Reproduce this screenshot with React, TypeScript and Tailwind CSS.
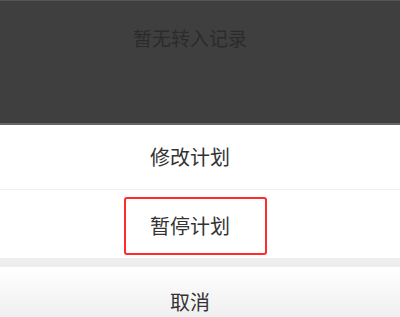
export default function App() {
  return (
    <div
      className="flex h-[317px] w-[400px] flex-col overflow-hidden bg-white text-[#333333]"
      style={{ fontFamily: '"Noto Sans CJK SC", "Noto Sans", sans-serif' }}
    >
      {/* dimmed page behind the sheet */}
      <div className="h-[125px] shrink-0 border-t border-t-[#555555] border-b-2 border-b-[#666666] bg-[#3f3f3f]">
        <p className="pt-[27px] pr-5 text-center text-[19px] leading-[20px] text-[#2b2b2b]">
          暂无转入记录
        </p>
      </div>

      {/* action sheet */}
      <div className="flex h-[65px] shrink-0 items-center justify-center border-b border-[#f0f0f0] pr-5 text-[20px]">
        修改计划
      </div>
      <div className="h-[68px] shrink-0 pl-[124px] pt-[7px]">
        <div className="flex h-[58px] w-[143px] items-center justify-center rounded-[3px] border-2 border-[#ff2a2a] pr-[11px] text-[20px]">
          暂停计划
        </div>
      </div>
      <div className="h-[9px] shrink-0 bg-[#eeeeee]" />
      <div className="flex h-[70px] shrink-0 items-center justify-center bg-gradient-to-b from-white to-[#e9e9e9] pr-5 text-[20px]">
        取消
      </div>
    </div>
  );
}
